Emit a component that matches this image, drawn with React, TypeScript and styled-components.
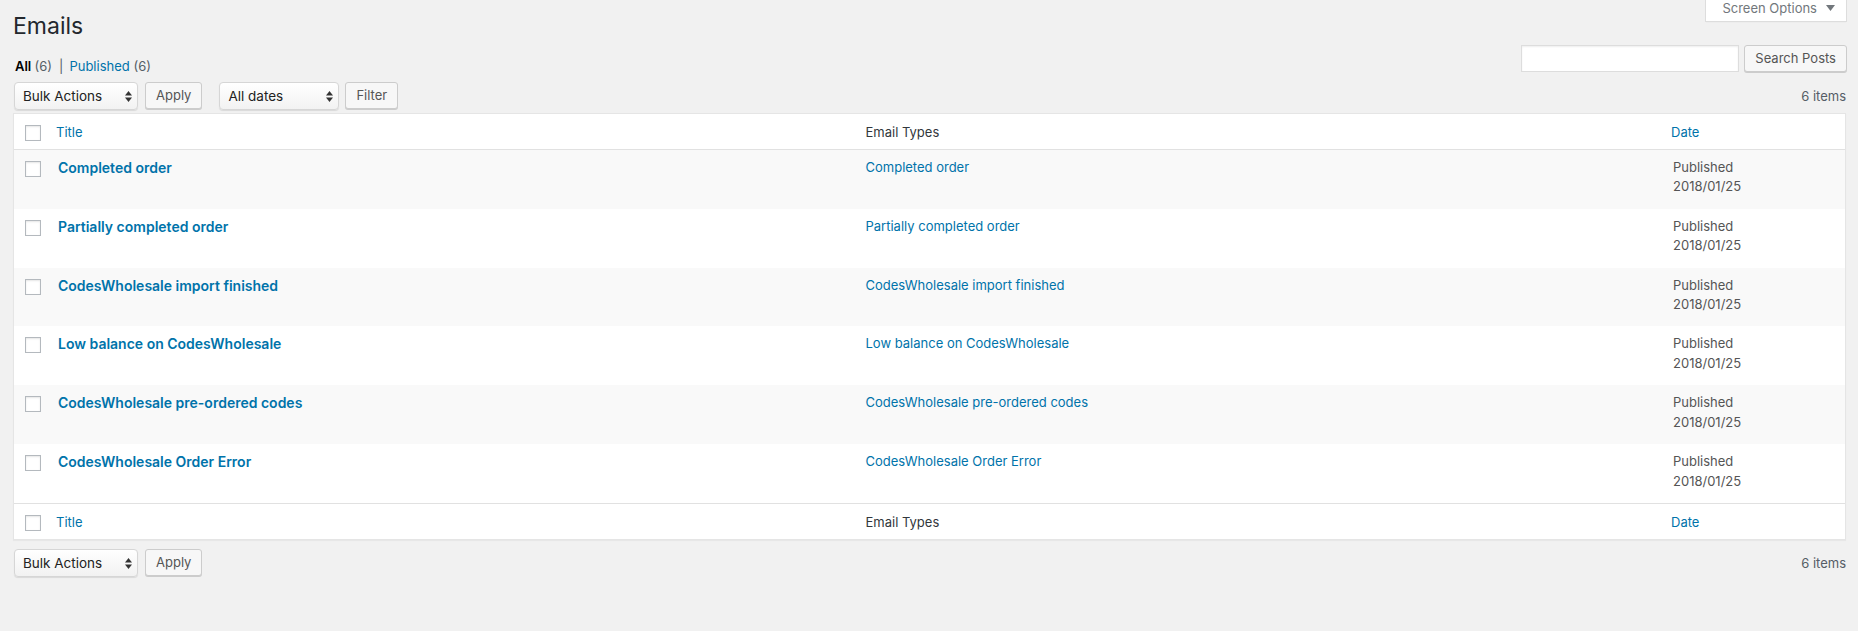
import React from "react";
import styled, { createGlobalStyle } from "styled-components";

const GlobalStyle = createGlobalStyle`
  html, body { margin: 0; padding: 0; }
  body {
    background: #f1f1f1;
    font-family: Inter, "Noto Sans", "Liberation Sans", sans-serif;
    font-size: 13px;
    line-height: 1.4em;
    color: #444;
    -webkit-font-smoothing: antialiased;
  }
  * { box-sizing: border-box; }
`;

const Page = styled.div`
  padding: 0 12px 40px 13px;
`;

const TopBar = styled.div`
  display: flex;
  justify-content: space-between;
  align-items: flex-start;
`;

const Heading = styled.h1`
  margin: 0;
  padding: 12px 0 0 0;
  font-size: 23px;
  font-weight: 400;
  line-height: 29.9px;
  color: #23282d;
`;

const ScreenOptionsTab = styled.button`
  display: flex;
  align-items: flex-start;
  gap: 9px;
  height: 22px;
  padding: 1px 11px 0 16px;
  margin: 0 -1px 0 0;
  background: #fff;
  border: 1px solid #ddd;
  border-top: none;
  box-shadow: 0 1px 1px -1px rgba(0, 0, 0, 0.1);
  font-family: inherit;
  font-size: 13px;
  line-height: 15px;
  color: #72777c;
  cursor: pointer;
`;

const Caret = styled.svg`
  margin-top: 4px;
  width: 9px;
  height: 6px;
  fill: #72777c;
`;

const SearchRow = styled.div`
  display: flex;
  justify-content: space-between;
  align-items: flex-start;
  height: 28px;
  margin-top: 3px;
`;

const Subsubsub = styled.ul`
  display: flex;
  list-style: none;
  margin: 11px 0 0 2px;
  padding: 0;
  font-size: 13px;
  line-height: 20px;
  color: #555d66;
`;

const FilterItem = styled.li`
  white-space: pre;
`;

const FilterLink = styled.a<{ $current?: boolean }>`
  color: ${(p) => (p.$current ? "#000" : "#0073aa")};
  font-weight: ${(p) => (p.$current ? 600 : 400)};
  text-decoration: none;
`;

const Count = styled.span`
  color: #555d66;
  font-weight: 400;
`;

const Separator = styled.span`
  color: #555d66;
  padding: 0 6px 0 7px;
`;

const SearchBox = styled.div`
  display: flex;
  align-items: flex-start;
  gap: 5px;
  margin-right: -1px;
`;

const SearchInput = styled.input`
  width: 218px;
  height: 27px;
  margin: 0;
  padding: 3px 5px;
  border: 1px solid #ddd;
  background: #fff;
  box-shadow: inset 0 1px 2px rgba(0, 0, 0, 0.07);
  font-family: inherit;
  font-size: 13px;
  outline: none;
`;

const Button = styled.button<{ $ml?: number }>`
  height: 27px;
  margin: ${(p) => (p.$ml ? `0 0 0 ${p.$ml}px` : "0")};
  padding: 0 10px 1px;
  background: #f7f7f7;
  border: 1px solid #ccc;
  border-radius: 3px;
  box-shadow: 0 1px 0 #ccc;
  font-family: inherit;
  font-size: 13px;
  line-height: 25px;
  color: #555;
  white-space: nowrap;
  cursor: pointer;
`;

const Tablenav = styled.div`
  display: flex;
  justify-content: space-between;
  align-items: center;
  height: 28px;
  margin-top: 9px;
`;

const Actions = styled.div`
  display: flex;
  align-items: center;
`;

const SelectWrap = styled.div<{ $w: number; $ml: number }>`
  position: relative;
  width: ${(p) => p.$w}px;
  height: 28px;
  margin-left: ${(p) => p.$ml}px;
`;

const Select = styled.select`
  appearance: none;
  -webkit-appearance: none;
  width: 100%;
  height: 100%;
  margin: 0;
  padding: 0 20px 0 8px;
  border: 1px solid #d6d6d6;
  border-radius: 4px;
  background: linear-gradient(#ffffff, #f2f2f2);
  box-shadow: 0 1px 1px rgba(0, 0, 0, 0.1), inset 0 1px 0 #fff;
  font-family: inherit;
  font-size: 13.5px;
  color: #222;
  outline: none;
`;

const SelectArrows = styled.svg`
  position: absolute;
  right: 6px;
  top: 9px;
  width: 7px;
  height: 11px;
  fill: #333;
  pointer-events: none;
`;

const ItemsCount = styled.span`
  font-size: 13px;
  color: #555d66;
`;

const Table = styled.div`
  margin-top: 3px;
  background: #fff;
  border: 1px solid #e5e5e5;
  box-shadow: 0 1px 1px rgba(0, 0, 0, 0.04);
`;

const Row = styled.div<{ $kind: "head" | "foot" | "body"; $striped?: boolean }>`
  display: grid;
  grid-template-columns: 34px 1fr 1fr 182px;
  height: ${(p) => (p.$kind === "body" ? "58.83px" : "36px")};
  background: ${(p) => (p.$striped ? "#f9f9f9" : "#fff")};
  border-bottom: ${(p) => (p.$kind === "head" ? "1px solid #e1e1e1" : "none")};
  border-top: ${(p) => (p.$kind === "foot" ? "1px solid #e1e1e1" : "none")};
`;

const CheckCell = styled.div`
  padding: 11px 0 0 11px;
`;

const Checkbox = styled.input`
  appearance: none;
  -webkit-appearance: none;
  display: block;
  width: 16px;
  height: 16px;
  margin: 0;
  border: 1px solid #b4b9be;
  background: #fff;
  box-shadow: inset 0 1px 2px rgba(0, 0, 0, 0.1);
`;

const HeadCell = styled.div<{ $sortable?: boolean }>`
  padding: 9.5px 10px 0 ${(p) => (p.$sortable ? 8 : 10)}px;
  font-size: 13px;
  line-height: 18.2px;
  color: #32373c;
`;

const HeadLink = styled.a`
  color: #0073aa;
  text-decoration: none;
`;

const Cell = styled.div`
  padding: 8px 10px;
  font-size: 13px;
  line-height: 19.5px;
  color: #555;
`;

const RowTitle = styled.a`
  font-size: 14px;
  font-weight: 600;
  color: #0073aa;
  text-decoration: none;
`;

const TypeLink = styled.a`
  color: #0073aa;
  text-decoration: none;
`;

const DateLine = styled.div`
  color: #555;
`;

const emails = [
  "Completed order",
  "Partially completed order",
  "CodesWholesale import finished",
  "Low balance on CodesWholesale",
  "CodesWholesale pre-ordered codes",
  "CodesWholesale Order Error",
];

const Arrows = () => (
  <SelectArrows viewBox="0 0 7 11">
    <polygon points="0,4.5 3.5,0 7,4.5" />
    <polygon points="0,6.5 7,6.5 3.5,11" />
  </SelectArrows>
);

const BulkSelect = ({ ml }: { ml: number }) => (
  <SelectWrap $w={124} $ml={ml}>
    <Select defaultValue="-1">
      <option value="-1">Bulk Actions</option>
      <option value="trash">Move to Trash</option>
    </Select>
    <Arrows />
  </SelectWrap>
);

const HeaderRow = ({ kind }: { kind: "head" | "foot" }) => (
  <Row $kind={kind}>
    <CheckCell>
      <Checkbox type="checkbox" aria-label="Select All" />
    </CheckCell>
    <HeadCell $sortable>
      <HeadLink href="#">Title</HeadLink>
    </HeadCell>
    <HeadCell>Email Types</HeadCell>
    <HeadCell $sortable>
      <HeadLink href="#">Date</HeadLink>
    </HeadCell>
  </Row>
);

export default function App() {
  return (
    <>
      <GlobalStyle />
      <Page>
        <TopBar>
          <Heading>Emails</Heading>
          <ScreenOptionsTab>
            Screen Options
            <Caret viewBox="0 0 9 6">
              <polygon points="0,0 9,0 4.5,6" />
            </Caret>
          </ScreenOptionsTab>
        </TopBar>

        <SearchRow>
          <Subsubsub>
            <FilterItem>
              <FilterLink href="#" $current>
                All <Count>(6)</Count>
              </FilterLink>
              <Separator>|</Separator>
            </FilterItem>
            <FilterItem>
              <FilterLink href="#">
                Published <Count>(6)</Count>
              </FilterLink>
            </FilterItem>
          </Subsubsub>
          <SearchBox>
            <SearchInput type="search" aria-label="Search Posts" />
            <Button>Search Posts</Button>
          </SearchBox>
        </SearchRow>

        <Tablenav>
          <Actions>
            <BulkSelect ml={1} />
            <Button $ml={7}>Apply</Button>
            <SelectWrap $w={120} $ml={17}>
              <Select defaultValue="0">
                <option value="0">All dates</option>
                <option value="201801">January 2018</option>
              </Select>
              <Arrows />
            </SelectWrap>
            <Button $ml={6}>Filter</Button>
          </Actions>
          <ItemsCount>6 items</ItemsCount>
        </Tablenav>

        <Table>
          <HeaderRow kind="head" />
          {emails.map((e, i) => (
            <Row key={e} $kind="body" $striped={i % 2 === 0}>
              <CheckCell>
                <Checkbox type="checkbox" aria-label={`Select ${e}`} />
              </CheckCell>
              <Cell>
                <RowTitle href="#">{e}</RowTitle>
              </Cell>
              <Cell>
                <TypeLink href="#">{e}</TypeLink>
              </Cell>
              <Cell>
                <DateLine>Published</DateLine>
                <DateLine>2018/01/25</DateLine>
              </Cell>
            </Row>
          ))}
          <HeaderRow kind="foot" />
        </Table>

        <Tablenav>
          <Actions>
            <BulkSelect ml={1} />
            <Button $ml={7}>Apply</Button>
          </Actions>
          <ItemsCount>6 items</ItemsCount>
        </Tablenav>
      </Page>
    </>
  );
}
